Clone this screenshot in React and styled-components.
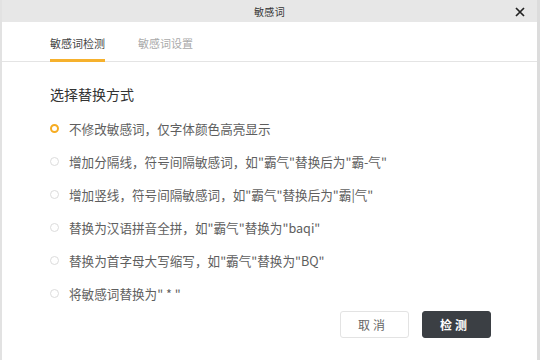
import React, { useState } from "react";
import styled, { createGlobalStyle } from "styled-components";

const GlobalStyle = createGlobalStyle`
  * { box-sizing: border-box; }
  body {
    margin: 0;
    background: #fff;
    font-family: "Noto Sans CJK SC", "Noto Sans", sans-serif;
  }
`;

const Dialog = styled.div`
  width: 540px;
  height: 360px;
  background: #fff;
  border-left: 2px solid #e2e2e2;
  border-right: 3px solid #dcdcdc;
  display: flex;
  flex-direction: column;
`;

const TitleBar = styled.div`
  height: 22px;
  background: #e7e7e7;
  display: grid;
  grid-template-columns: 1fr auto 1fr;
  align-items: center;
`;

const Title = styled.span`
  font-size: 10px;
  color: #333;
  letter-spacing: 0.3px;
`;

const CloseButton = styled.button`
  justify-self: end;
  margin-right: 11px;
  margin-top: 2px;
  width: 12px;
  height: 12px;
  padding: 0;
  border: none;
  background: none;
  display: flex;
  align-items: center;
  justify-content: center;
  cursor: pointer;
`;

const TabBar = styled.div`
  height: 40px;
  display: flex;
  gap: 33px;
  padding-left: 48px;
  border-bottom: 1px solid #e4e4e4;
`;

const Tab = styled.div`
  height: 40px;
  margin-bottom: -1px;
  padding-top: 5px;
  display: flex;
  align-items: center;
  font-size: 11px;
  color: ${(p) => (p.$active ? "#444" : "#aaa")};
  border-bottom: 3px solid ${(p) => (p.$active ? "#f6b12d" : "transparent")};
  cursor: pointer;
`;

const Body = styled.div`
  flex: 1;
  padding: 0 46px 0 48px;
  display: flex;
  flex-direction: column;
`;

const Heading = styled.h3`
  margin: 22px 0 8px;
  font-size: 14px;
  line-height: 20px;
  font-weight: normal;
  color: #333;
`;

const OptionRow = styled.label`
  height: 33px;
  display: flex;
  align-items: center;
  gap: 10px;
  font-size: 12.6px;
  color: #5e5e5e;
  cursor: pointer;
`;

const Radio = styled.span`
  width: 9px;
  height: 9px;
  border-radius: 50%;
  background: #fff;
  border: ${(p) => (p.$checked ? "2.5px solid #f6ac22" : "1px solid #dcdcdc")};
  flex-shrink: 0;
`;

const Footer = styled.div`
  margin-top: 1px;
  display: flex;
  justify-content: flex-end;
  gap: 13px;
`;

const Button = styled.button`
  width: 69px;
  height: 27px;
  border-radius: 3px;
  font-family: inherit;
  font-size: 12px;
  letter-spacing: 3px;
  padding-left: 3px;
  cursor: pointer;
  border: 1px solid ${(p) => (p.$primary ? "#3b3f44" : "#e3e3e3")};
  background: ${(p) => (p.$primary ? "#3b3f44" : "#fff")};
  color: ${(p) => (p.$primary ? "#fff" : "#666")};
  font-weight: ${(p) => (p.$primary ? "bold" : "normal")};
`;

const options = [
  "不修改敏感词，仅字体颜色高亮显示",
  '增加分隔线，符号间隔敏感词，如"霸气"替换后为"霸-气"',
  '增加竖线，符号间隔敏感词，如"霸气"替换后为"霸|气"',
  '替换为汉语拼音全拼，如"霸气"替换为"baqi"',
  '替换为首字母大写缩写，如"霸气"替换为"BQ"',
  '将敏感词替换为" * "',
];

export default function App() {
  const [tab, setTab] = useState(0);
  const [choice, setChoice] = useState(0);

  return (
    <>
      <GlobalStyle />
      <Dialog>
        <TitleBar>
          <span />
          <Title>敏感词</Title>
          <CloseButton type="button" aria-label="关闭">
            <svg width="10" height="10" viewBox="0 0 10 10">
              <path d="M1 1L9 9M9 1L1 9" stroke="#222" strokeWidth="1.7" />
            </svg>
          </CloseButton>
        </TitleBar>
        <TabBar>
          <Tab $active={tab === 0} onClick={() => setTab(0)}>敏感词检测</Tab>
          <Tab $active={tab === 1} onClick={() => setTab(1)}>敏感词设置</Tab>
        </TabBar>
        <Body>
          <Heading>选择替换方式</Heading>
          {options.map((text, i) => (
            <OptionRow key={i} onClick={() => setChoice(i)}>
              <Radio $checked={choice === i} />
              {text}
            </OptionRow>
          ))}
          <Footer>
            <Button type="button">取消</Button>
            <Button type="button" $primary>检测</Button>
          </Footer>
        </Body>
      </Dialog>
    </>
  );
}
